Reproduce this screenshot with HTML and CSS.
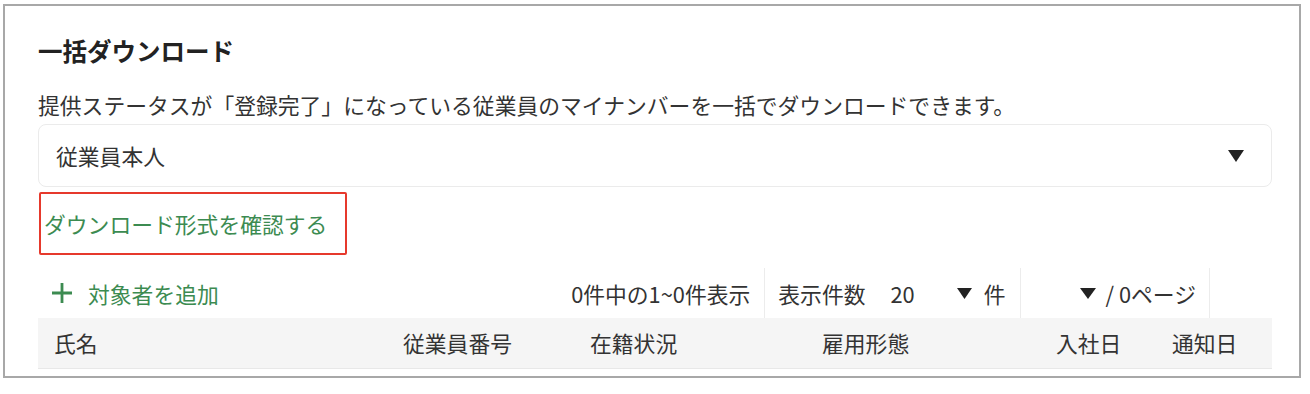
FILE: index.html
```html
<!DOCTYPE html>
<html lang="ja">
<head>
<meta charset="utf-8">
<title>一括ダウンロード</title>
<link rel="stylesheet" href="styles.css">
</head>
<body>
<div class="frame">
  <h2 class="title">一括ダウンロード</h2>
  <p class="desc">提供ステータスが「登録完了」になっている従業員のマイナンバーを一括でダウンロードできます。</p>
  <div class="select">
    <span class="select-value">従業員本人</span>
    <svg class="caret-lg" width="16" height="12" viewBox="0 0 16 12"><polygon points="0,0 16,0 8,12" fill="#222"/></svg>
  </div>
  <div class="highlight">
    <a class="link" href="#">ダウンロード形式を確認する</a>
  </div>
  <div class="toolbar">
    <a class="add" href="#">
      <svg class="plus" width="24" height="24" viewBox="0 0 24 24"><path d="M12 2V22M2 12H22" stroke="#3c8b51" stroke-width="2.8" fill="none"/></svg>
      <span>対象者を追加</span>
    </a>
    <div class="spacer"></div>
    <div class="cell count">0件中の1~0件表示</div>
    <div class="cell perpage">
      <span class="label">表示件数</span>
      <span class="num">20</span>
      <svg class="caret" width="15" height="11" viewBox="0 0 15 11"><polygon points="0,0 15,0 7.5,11" fill="#222"/></svg>
      <span class="unit">件</span>
    </div>
    <div class="cell page">
      <svg class="caret" width="16" height="11" viewBox="0 0 16 11"><polygon points="0,0 16,0 8,11" fill="#222"/></svg>
      <span class="pages">/ 0ページ</span>
    </div>
    <div class="tail"></div>
  </div>
  <div class="thead">
    <div class="th">氏名</div>
    <div class="th">従業員番号</div>
    <div class="th">在籍状況</div>
    <div class="th">雇用形態</div>
    <div class="th">入社日</div>
    <div class="th">通知日</div>
  </div>
</div>
</body>
</html>
```

FILE: styles.css
```css
html, body {
  margin: 0;
  padding: 0;
  background: #ffffff;
}

body {
  font-family: "Noto Sans CJK JP", "Noto Sans", sans-serif;
  color: #333333;
  font-size: 21.8px;
}

.frame {
  box-sizing: border-box;
  width: 1298px;
  height: 374px;
  margin: 4px 0 0 3px;
  border: 2px solid #a8a8a8;
  padding: 27px 27px 0 33px;
  overflow: hidden;
}

.title {
  margin: 0;
  font-size: 24.5px;
  line-height: 36px;
  font-weight: 700;
  color: #222222;
}

.desc {
  margin: 20px 0 0 0;
  line-height: 32px;
  color: #333333;
}

.select {
  box-sizing: border-box;
  margin-top: 3px;
  height: 63px;
  border: 1px solid #ebebeb;
  border-radius: 8px;
  display: flex;
  align-items: center;
  justify-content: space-between;
  padding: 0 27px 0 17px;
}

.select-value {
  line-height: 32px;
}

.caret-lg {
  display: block;
}

.highlight {
  box-sizing: border-box;
  margin: 5px 0 0 1px;
  width: 308px;
  height: 63px;
  border: 2px solid #e6392c;
  border-radius: 2px;
  display: flex;
  align-items: center;
  padding-left: 3px;
}

.link {
  color: #3c8b51;
  text-decoration: none;
  line-height: 32px;
  white-space: nowrap;
}

.toolbar {
  margin-top: 13px;
  height: 50px;
  display: flex;
  align-items: stretch;
}

.add {
  display: flex;
  align-items: center;
  gap: 14px;
  padding-left: 12px;
  color: #3c8b51;
  text-decoration: none;
}

.plus {
  display: block;
}

.spacer {
  flex: 1;
}

.cell {
  display: flex;
  align-items: center;
  border-right: 1px solid #ececec;
  white-space: nowrap;
}

.count {
  padding: 0 14px;
}

.perpage {
  padding: 0 14px 0 13px;
}

.perpage .num {
  margin-left: 25px;
}

.perpage .caret {
  margin-left: 42px;
}

.perpage .unit {
  margin-left: 12px;
}

.page {
  padding: 0 13px 0 59px;
}

.page .pages {
  margin-left: 10px;
}

.caret {
  display: block;
}

.tail {
  width: 62px;
}

.thead {
  box-sizing: border-box;
  height: 51px;
  background: #f5f5f5;
  border-bottom: 1px solid #e8e8e8;
  display: grid;
  grid-template-columns: 349px 187px 232px 234px 116px 1fr;
  align-items: center;
}

.th {
  padding-left: 16px;
  line-height: 32px;
  color: #333333;
  white-space: nowrap;
}
```
